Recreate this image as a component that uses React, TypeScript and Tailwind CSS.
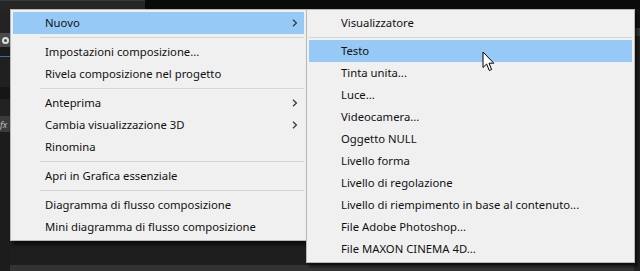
import React from "react";

const font = { fontFamily: '"Noto Sans", "Open Sans", Arial, sans-serif' };

function Chevron() {
  return (
    <svg width="6" height="8" viewBox="0 0 6 8" className="shrink-0">
      <path d="M1 0.8 L4.4 4 L1 7.2" fill="none" stroke="#3a3a3a" strokeWidth="1.3" />
    </svg>
  );
}

type Item = { label?: string; sep?: boolean; sub?: boolean; active?: boolean };

const mainItems: Item[] = [
  { label: "Nuovo", sub: true, active: true },
  { sep: true },
  { label: "Impostazioni composizione..." },
  { label: "Rivela composizione nel progetto" },
  { sep: true },
  { label: "Anteprima", sub: true },
  { label: "Cambia visualizzazione 3D", sub: true },
  { label: "Rinomina" },
  { sep: true },
  { label: "Apri in Grafica essenziale" },
  { sep: true },
  { label: "Diagramma di flusso composizione" },
  { label: "Mini diagramma di flusso composizione" },
];

const subItems: Item[] = [
  { label: "Visualizzatore" },
  { sep: true },
  { label: "Testo", active: true },
  { label: "Tinta unita..." },
  { label: "Luce..." },
  { label: "Videocamera..." },
  { label: "Oggetto NULL" },
  { label: "Livello forma" },
  { label: "Livello di regolazione" },
  { label: "Livello di riempimento in base al contenuto..." },
  { label: "File Adobe Photoshop..." },
  { label: "File MAXON CINEMA 4D..." },
];

function MenuList({ items, sepH, sepFull }: { items: Item[]; sepH: string; sepFull: boolean }) {
  return (
    <div className="flex flex-col">
      {items.map((it, i) =>
        it.sep ? (
          <div key={i} className={`${sepH} flex items-center ${sepFull ? "" : "pl-[27px]"}`}>
            <div className="h-px w-full bg-[#d5d5d5]" />
          </div>
        ) : (
          <div
            key={i}
            className={`h-[22px] flex items-center pl-[32px] pr-[6px] text-[11.3px] text-[#111] ${
              it.active ? "bg-[#96c9f6]" : ""
            }`}
          >
            <span className="flex-1 whitespace-nowrap">{it.label}</span>
            {it.sub ? <Chevron /> : null}
          </div>
        )
      )}
    </div>
  );
}

export default function App() {
  return (
    <div className="relative w-[640px] h-[271px] overflow-hidden bg-[#1e1e1e]" style={font}>
      {/* background app chrome */}
      <div className="flex flex-col h-full">
        <div className="flex h-[9px] shrink-0">
          <div className="w-[145px] bg-[#262626] border-t border-[#3a3a3a]" />
          <div className="flex-1 bg-[#0a0a0a]" />
        </div>
        <div className="flex flex-1">
          <div className="w-[10px] flex flex-col">
            <div className="h-[24px] bg-[#232323]" />
            <div className="h-[14px] bg-[#4a4a4a] flex items-center justify-end pr-[1px]">
              <div className="w-[7px] h-[7px] rounded-full border-2 border-[#e0e0e0]" />
            </div>
            <div className="h-[9px] bg-[#1b1b1b]" />
            <div className="h-px bg-[#3d6ea8]" />
            <div className="h-[30px] bg-[#202020]" />
            <div className="h-[12px] bg-[#161616]" />
            <div className="h-[17px] bg-[#222222]" />
            <div className="h-[16px] bg-[#3b3b3b] flex items-center text-[9px] italic leading-none text-[#bbbbbb]">fx</div>
            <div className="flex-1 bg-[#1c1c1c]" />
          </div>
          <div className="flex-1 flex flex-col">
            <div className="flex-1" />
            <div className="h-[6px] bg-[#333333]" />
          </div>
          <div className="w-[6px] flex flex-col">
            <div className="h-[19px] bg-[#141414]" />
            <div className="h-[8px] bg-[#3a3a3a]" />
            <div className="flex-1 bg-[#222222]" />
          </div>
        </div>
      </div>

      {/* main context menu */}
      <div className="absolute left-[10px] top-[9px] w-[297px] bg-[#f0f0f0] border border-[#b8b8b8] p-[2px] shadow-[3px_4px_3px_rgba(0,0,0,0.55)]">
        <MenuList items={mainItems} sepH="h-[7px]" sepFull={false} />
      </div>

      {/* submenu */}
      <div className="absolute left-[306px] top-[9px] w-[329px] bg-[#f0f0f0] border border-[#b8b8b8] p-[2px] shadow-[3px_4px_3px_rgba(0,0,0,0.55)]">
        <MenuList items={subItems} sepH="h-[6px]" sepFull={true} />
      </div>

      {/* mouse cursor */}
      <svg className="absolute left-[482px] top-[51px]" width="14" height="22" viewBox="0 0 14 22">
        <path
          d="M1 1 L1 16.5 L4.6 13 L7.3 19.5 L9.6 18.5 L7 12.2 L11.8 12.2 Z"
          fill="#ffffff"
          stroke="#000000"
          strokeWidth="1"
          strokeLinejoin="miter"
        />
      </svg>
    </div>
  );
}
